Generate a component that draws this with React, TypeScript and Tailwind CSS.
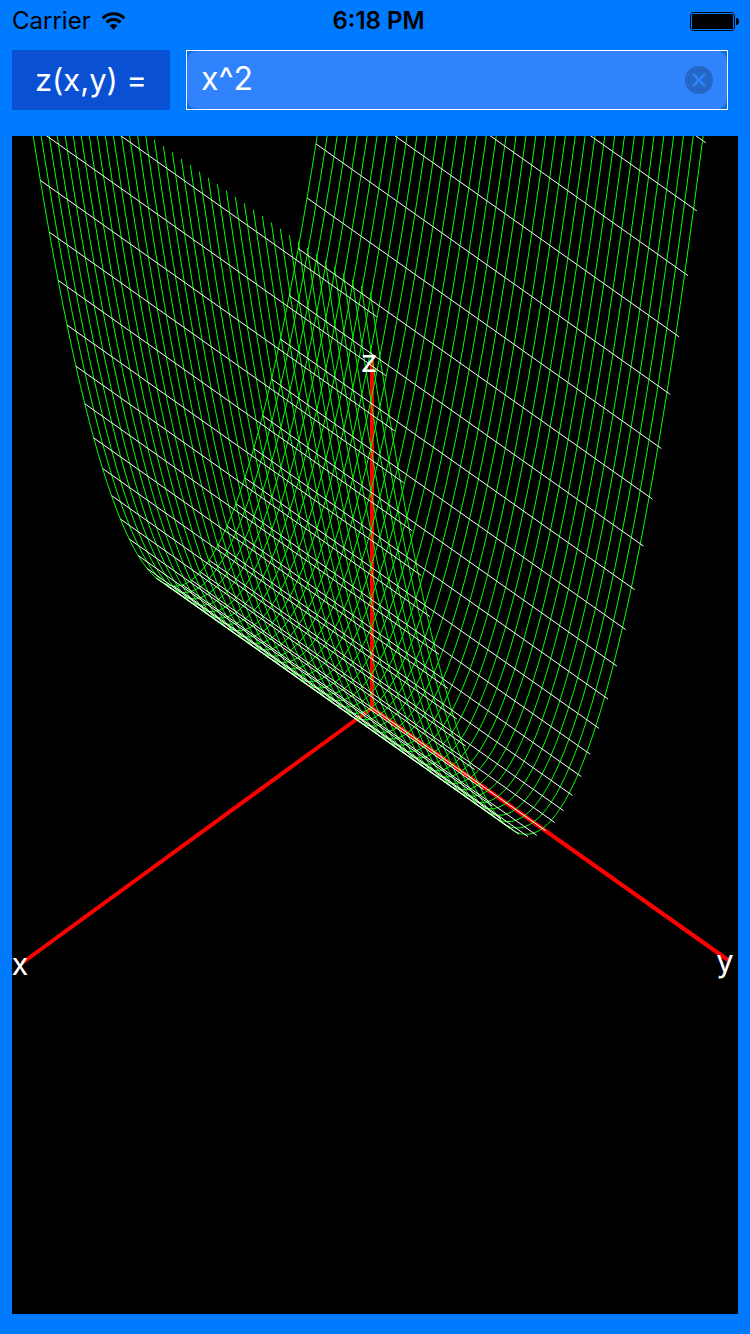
import { useState } from "react";

const ORIGIN = { x: 359.5, y: 571.5 };
const X_STEP = { x: -8.89, y: 6.47 };
const Y_STEP = { x: 9, y: 6.365 };
const Z_SCALE = 1.764;
const MIN = -20;
const MAX = 19.36;

function project(x: number, y: number, z: number): string {
  const px = ORIGIN.x + x * X_STEP.x + y * Y_STEP.x;
  const py = ORIGIN.y + x * X_STEP.y + y * Y_STEP.y - z * Z_SCALE;
  return `${px.toFixed(2)} ${py.toFixed(2)}`;
}

const indices = Array.from({ length: 40 }, (_, i) => MIN + i);

const rulings = indices
  .map((x) => `M${project(x, MIN, x * x)}L${project(x, MAX, x * x)}`)
  .join("");

const parabolas = indices
  .map((y) => {
    const points: string[] = [];
    for (let x = MIN; x < MAX; x += 0.5) points.push(project(x, y, x * x));
    points.push(project(MAX, y, MAX * MAX));
    return `M${points.join("L")}`;
  })
  .join("");

function Plot() {
  return (
    <svg
      viewBox="0 0 726 1178"
      className="block w-full bg-black"
      role="img"
      aria-label="Surface plot"
      fill="none"
    >
      <g stroke="#ff0000" strokeWidth="4">
        <path d="M360 572L10 827" />
        <path d="M360 572L716 824" />
        <path d="M360 572V224" />
      </g>
      <path d={parabolas} stroke="#00ff00" strokeWidth="1" />
      <path d={rulings} stroke="#ffffff" strokeWidth="1" />
      <g
        fill="#ffffff"
        fontSize="31"
        textAnchor="middle"
        className="font-['Inter',sans-serif]"
      >
        <text x="8" y="839">x</text>
        <text x="713" y="836">y</text>
        <text x="357" y="236">z</text>
      </g>
    </svg>
  );
}

function StatusBar() {
  return (
    <header className="grid h-10 grid-cols-3 items-center pt-0.5 pr-[11px] pl-3 text-2xl text-black">
      <div className="flex items-center gap-2.5">
        <span>Carrier</span>
        <svg width="25" height="20" viewBox="0 0 26 20" fill="none" aria-hidden="true">
          <path d="M1.8 7.2a15.8 15.8 0 0 1 22.4 0" stroke="black" strokeWidth="3.2" />
          <path d="M5.8 11.4a10.2 10.2 0 0 1 14.4 0" stroke="black" strokeWidth="3.2" />
          <path d="M13 19l-4.2-4.2a6 6 0 0 1 8.4 0z" fill="black" />
        </svg>
      </div>
      <span className="pl-1.5 text-center font-semibold">6:18 PM</span>
      <svg
        className="justify-self-end"
        width="49"
        height="19"
        viewBox="0 0 49 19"
        fill="none"
        aria-hidden="true"
      >
        <rect x="0.5" y="0.5" width="44" height="18" rx="3" stroke="black" />
        <rect x="2" y="2" width="41" height="15" rx="1.5" fill="black" />
        <path d="M46 6h1q2 0.5 2 3.5t-2 3.5h-1z" fill="black" />
      </svg>
    </header>
  );
}

export default function App() {
  const [expression, setExpression] = useState("x^2");

  return (
    <main className="min-h-screen bg-[#007aff] pb-5 font-['Inter',sans-serif]">
      <StatusBar />
      <form
        className="mt-2.5 mr-[22px] ml-3 flex h-[60px] gap-4"
        onSubmit={(event) => event.preventDefault()}
      >
        <label
          htmlFor="expression"
          className="flex w-[158px] shrink-0 items-center justify-center bg-[#0a50d2] text-[31px] text-white"
        >
          z(x,y) =
        </label>
        <div className="flex min-w-0 flex-1 border border-white bg-[#0a6ee0]">
          <div className="flex min-w-0 flex-1 items-center rounded-[10px] bg-[#3083fc] px-3.5">
            <input
              id="expression"
              type="text"
              value={expression}
              onChange={(event) => setExpression(event.target.value)}
              className="h-full min-w-0 flex-1 bg-transparent pb-1 text-[32px] text-white outline-none"
            />
            <button type="button" aria-label="Clear" onClick={() => setExpression("")}>
              <svg width="28" height="28" viewBox="0 0 28 28" fill="none">
                <circle cx="14" cy="14" r="14" fill="#2567c6" />
                <path
                  d="M8.7 8.7l10.6 10.6M19.3 8.7L8.7 19.3"
                  stroke="#3083fc"
                  strokeWidth="2.6"
                  strokeLinecap="round"
                />
              </svg>
            </button>
          </div>
        </div>
      </form>
      <section className="mx-3 mt-[26px]">
        <Plot />
      </section>
    </main>
  );
}
